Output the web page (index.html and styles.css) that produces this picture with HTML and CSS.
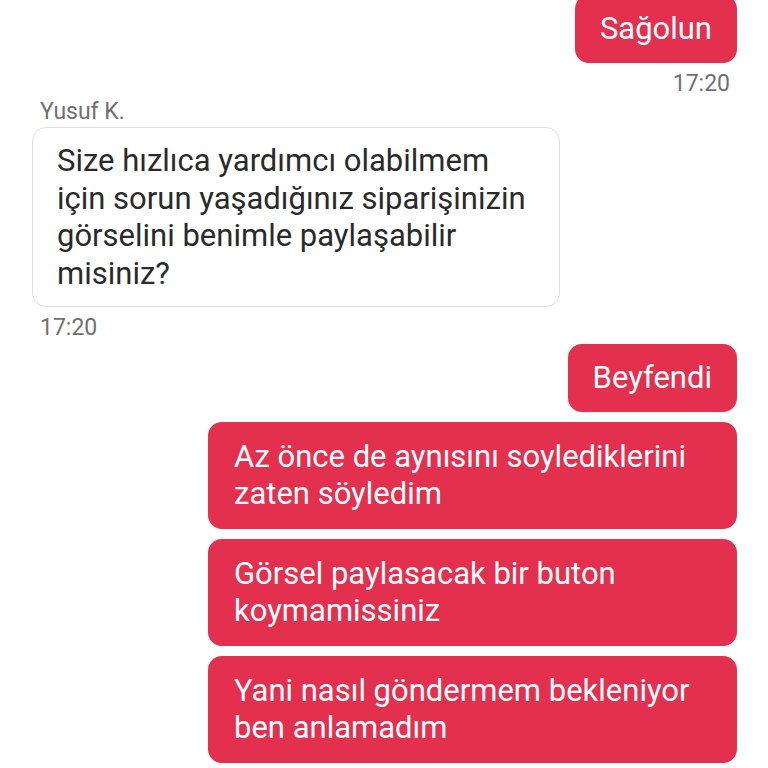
FILE: index.html
```html
<!DOCTYPE html>
<html lang="tr">
  <head>
    <meta charset="UTF-8" />
    <meta name="viewport" content="width=device-width, initial-scale=1.0" />
    <title>Sohbet</title>
    <link rel="stylesheet" href="styles.css">
  </head>
  <body>
    <div class="chat">
      <div class="group sent">
        <div class="bubble">Sağolun</div>
        <span class="time">17:20</span>
      </div>

      <div class="group received">
        <span class="sender">Yusuf K.</span>
        <div class="bubble">
          Size hızlıca yardımcı olabilmem için sorun yaşadığınız siparişinizin
          görselini benimle paylaşabilir misiniz?
        </div>
        <span class="time">17:20</span>
      </div>

      <div class="group sent">
        <div class="bubble">Beyfendi</div>
        <div class="bubble wide">Az önce de aynısını soylediklerini zaten söyledim</div>
        <div class="bubble wide">Görsel paylasacak bir buton koymamissiniz</div>
        <div class="bubble wide">Yani nasıl göndermem bekleniyor ben anlamadım</div>
      </div>
    </div>
  </body>
</html>
```

FILE: styles.css
```css
body {
  margin: 0;
  padding: 0;
  background-color: #ffffff;
  font-family: Roboto, "Liberation Sans", sans-serif;
  overflow: hidden;
}

.chat {
  display: flex;
  flex-direction: column;
  padding: 0 31px 0 32px;
  margin-top: -5px;
}

.group {
  display: flex;
  flex-direction: column;
  gap: 10px;
}

.sent {
  align-items: flex-end;
}

.received {
  align-items: flex-start;
  gap: 0;
}

.bubble {
  font-size: 31px;
  line-height: 37px;
  padding: 15px 25px 16px;
  border-radius: 14px;
  box-sizing: border-box;
}

.sent .bubble {
  background-color: #e3304f;
  color: #ffffff;
}

.sent .wide {
  width: 529px;
  padding: 16px 25px 17px 26px;
}

.received .bubble {
  width: 528px;
  background-color: #ffffff;
  color: #2a2a2a;
  border: 1px solid #dedede;
  line-height: 37.5px;
  padding: 14px 24px 14px 24px;
}

.time {
  font-size: 23px;
  color: #707070;
  line-height: 27px;
}

.sent .time {
  margin-top: -3px;
  margin-right: 7px;
}

.received .time {
  margin-top: 7px;
  margin-left: 8px;
  margin-bottom: 3px;
}

.sender {
  font-size: 23px;
  color: #707070;
  line-height: 27px;
  margin-top: 1px;
  margin-left: 8px;
  margin-bottom: 2px;
}
```
